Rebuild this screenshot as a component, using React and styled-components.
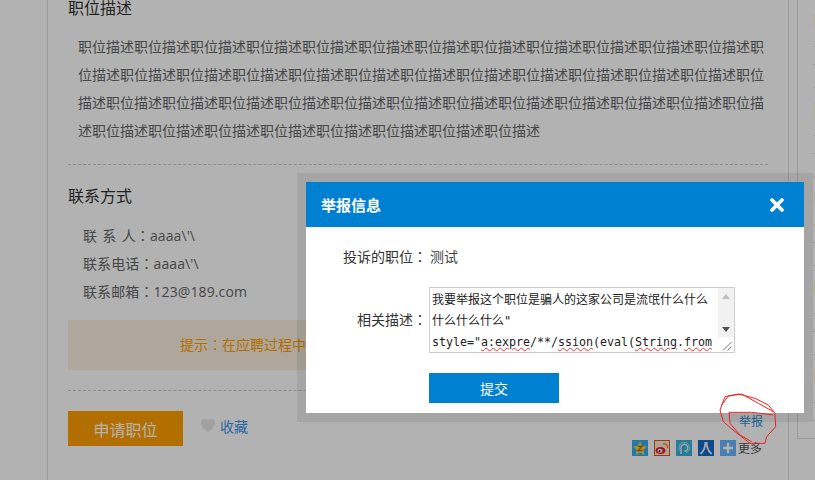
import React from 'react';
import styled, {createGlobalStyle} from 'styled-components';

const GlobalStyle = createGlobalStyle`
html, body {
    margin: 0;
    height: 100%;
    overflow: hidden;
    background: white;
}
body {
    font-family: 'Open Sans', 'Noto Sans CJK SC', sans-serif;
    font-size: 14px;
    color: #666;
}
* {
    box-sizing: border-box;
}
`;

const Page = styled.div`
display: flex;
align-items: flex-start;
height: 480px;
padding-left: 47px;
overflow: hidden;
`;

const Main = styled.div`
flex: 0 0 742px;
height: 480px;
padding-left: 20px;
border-left: 1px solid #ddd;
border-right: 1px solid #ddd;
`;

const Content = styled.div`
width: 700px;
margin-top: -4px;
`;

const SectionTitle = styled.h3`
margin: 0;
font-size: 16px;
font-weight: 400;
line-height: 24px;
color: #333;
`;

const Paragraph = styled.p`
margin: 13px 0 0;
padding-left: 10px;
width: 698px;
font-size: 14px;
line-height: 28px;
color: #666;
word-break: break-all;
`;

const Dashed = styled.div`
margin-top: ${props => props.$top}px;
border-top: 1px dashed #ccc;
`;

const ContactTitle = styled(SectionTitle)`
margin-top: 19px;
`;

const ContactList = styled.ul`
margin: 14px 0 0;
padding: 0 0 0 15px;
list-style: none;
letter-spacing: 0.1px;
word-spacing: 1.5px;
color: #666;

li {
    height: 28px;
    line-height: 28px;
}
`;

// the fullwidth colon sits in the middle of its cell in the reference
const Colon = styled.span`
font-family: 'Noto Sans CJK TC', sans-serif;
line-height: 1;
`;

const Tip = styled.div`
margin-top: 14px;
height: 50px;
line-height: 50px;
text-align: center;
white-space: nowrap;
background: #fbf0df;
color: #ff9e00;
`;

const ActionRow = styled.div`
display: flex;
justify-content: space-between;
align-items: flex-start;
margin-top: 20px;
`;

const ActionLeft = styled.div`
display: flex;
align-items: center;
`;

const ApplyButton = styled.button`
width: 115px;
height: 35px;
padding: 0;
border: none;
background: #ff9f00;
font-family: inherit;
font-size: 16px;
color: white;
`;

const Favorite = styled.a`
display: flex;
align-items: center;
gap: 5px;
margin: -6px 0 0 18px;
color: #3c93ea;
`;

const ActionRight = styled.div`
display: flex;
flex-direction: column;
align-items: flex-end;
padding: 2px 6px 0 0;
`;

const ReportLink = styled.a`
margin-right: -1px;
font-size: 12px;
line-height: 17px;
color: #2a90d8;
`;

const ShareRow = styled.div`
display: flex;
align-items: center;
margin-top: 9px;
height: 18px;
`;

const ShareIcon = styled.svg`
display: block;
width: 16px;
height: 16px;
margin-right: 6px;
`;

const MoreLabel = styled.span`
margin-left: -4px;
font-size: 12px;
color: #555;
`;

const Sidebar = styled.aside`
flex: 0 0 220px;
margin: -24px 0 0 8px;
padding: 0 0 17px 15px;
border-left: 1px solid #ddd;
border-bottom: 1px solid #ddd;
`;

const SideItem = styled.div`
height: 89px;
padding: 13px 0 0 1px;
border-bottom: 1px solid #ddd;
font-size: 12px;
line-height: 20px;
white-space: nowrap;
color: #888;
`;

const SideTitle = styled.a`
display: block;
margin-bottom: 1px;
font-size: 14px;
color: #0080d0;
`;

const SideCompany = styled.div`
margin-bottom: 3px;
font-size: 14px;
color: #555;
`;

const Overlay = styled.div`
position: fixed;
top: 0;
right: 0;
bottom: 0;
left: 0;
background: rgba(0, 0, 0, 0.3);
`;

const DialogFrame = styled.div`
position: fixed;
top: 173px;
left: 297px;
width: 516px;
height: 249px;
padding: 9px;
background: rgba(0, 0, 0, 0.075);
`;

const Dialog = styled.div`
height: 231px;
background: white;
`;

const DialogHeader = styled.div`
display: flex;
justify-content: space-between;
align-items: center;
height: 45px;
padding: 0 20px 0 15px;
background: #0080d0;
color: white;
`;

const DialogTitle = styled.h4`
margin: 0;
font-size: 15px;
font-weight: 700;
`;

const CloseIcon = styled.svg`
display: block;
width: 14px;
height: 14px;
`;

const DialogBody = styled.div`
padding-top: 20px;
color: #333;
`;

const FormRow = styled.div`
display: flex;
align-items: center;
margin-top: ${props => props.$top || 0}px;
line-height: 20px;
`;

const FormLabel = styled.label`
flex: 0 0 121px;
height: 20px;
text-align: right;
`;

const FormValue = styled.span`
margin-left: 3px;
color: #444;
`;

const DescBox = styled.div`
position: relative;
width: 306px;
height: 66px;
margin-left: 2px;
padding: 2px 0 0 2px;
border: 1px solid #ccc;
overflow: hidden;
font-family: 'DejaVu Sans Mono', 'Noto Sans CJK SC', monospace;
font-size: 12px;
line-height: 21px;
white-space: pre;
color: #222;
`;

const CodeLine = styled.div`
font-size: 11.63px;
`;

const Misspelled = styled.span`
text-decoration: underline wavy #f03030;
text-decoration-thickness: 1px;
`;

const ScrollTrack = styled.div`
position: absolute;
top: 0;
right: 0;
display: flex;
flex-direction: column;
justify-content: space-between;
align-items: center;
width: 16px;
height: 49px;
padding: 6px 0 5px;
background: #f1f1f1;
`;

const ScrollArrow = styled.i`
display: block;
border-left: 4px solid transparent;
border-right: 4px solid transparent;
border-top: ${props => props.$down ? '5px solid #505050' : 'none'};
border-bottom: ${props => props.$down ? 'none' : '5px solid #c0c0c0'};
`;

const Resizer = styled.svg`
position: absolute;
right: 0;
bottom: 0;
display: block;
width: 16px;
height: 15px;
`;

const SubmitButton = styled.button`
display: block;
width: 130px;
height: 30px;
margin: 20px 0 0 123px;
padding: 0;
border: none;
background: #0080d0;
font-family: inherit;
font-size: 14px;
color: white;
`;

const Scribble = styled.svg`
position: fixed;
top: 380px;
left: 625px;
width: 190px;
height: 100px;
`;

const sideItems = [1, 2, 3, 4, 5];
const jobText = '职位描述'.repeat(45);

const App = () => {
    return (
        <>
            <GlobalStyle/>
            <Page>
                <Main>
                    <Content>
                        <SectionTitle>职位描述</SectionTitle>
                        <Paragraph>{jobText}</Paragraph>
                        <Dashed $top={19}/>
                        <ContactTitle>联系方式</ContactTitle>
                        <ContactList>
                            <li>联 系 人<Colon>：</Colon>aaaa\'\</li>
                            <li>联系电话<Colon>：</Colon>aaaa\'\</li>
                            <li>联系邮箱<Colon>：</Colon>123@189.com</li>
                        </ContactList>
                        <Tip>提示<Colon>：</Colon>在应聘过程中如遇到用人单位收取费用等情况请提高警惕并及时举报。</Tip>
                        <Dashed $top={20}/>
                        <ActionRow>
                            <ActionLeft>
                                <ApplyButton>申请职位</ApplyButton>
                                <Favorite>
                                    <svg width='14' height='13' viewBox='0 0 14 13'>
                                        <path d='M7 13 C3 10 0 7.5 0 4 C0 1.5 1.8 0 3.8 0 C5.2 0 6.3 .7 7 1.8 C7.7 .7 8.8 0 10.2 0 C12.2 0 14 1.5 14 4 C14 7.5 11 10 7 13 Z' fill='#e6e6e6'/>
                                    </svg>
                                    收藏
                                </Favorite>
                            </ActionLeft>
                            <ActionRight>
                                <ReportLink>举报</ReportLink>
                                <ShareRow>
                                    <ShareIcon viewBox='0 0 16 16'>
                                        <rect width='16' height='16' fill='#32abf0'/>
                                        <path d='M8 1 L10 6 L15 6.5 L11.2 10 L12.4 15 L8 12.4 L3.6 15 L4.8 10 L1 6.5 L6 6 Z' fill='#ffd030'/>
                                        <path d='M6 6.5 H10 L6 10.5 H10.5' fill='none' stroke='#a86a10' strokeWidth='1.3'/>
                                    </ShareIcon>
                                    <ShareIcon viewBox='0 0 16 16'>
                                        <rect x='.5' y='.5' width='15' height='15' fill='#fbe9d8' stroke='#e0541c'/>
                                        <ellipse cx='6.5' cy='10.5' rx='5' ry='3.6' fill='#e6162d'/>
                                        <ellipse cx='6' cy='10.8' rx='2.6' ry='2' fill='#fff'/>
                                        <circle cx='5.6' cy='11' r='1.1' fill='#222'/>
                                        <path d='M9 4 C12 3 14 5 13.4 8.2' fill='none' stroke='#f08a1c' strokeWidth='1.4'/>
                                    </ShareIcon>
                                    <ShareIcon viewBox='0 0 16 16'>
                                        <rect width='16' height='16' fill='#3ab0d8'/>
                                        <path d='M5 14 V8 A3.4 3.4 0 1 1 8.4 11.2' fill='none' stroke='#e4f6fa' strokeWidth='1.3'/>
                                        <path d='M3 11 V7.6 A5.2 5.2 0 1 1 10 12.6' fill='none' stroke='#b8e4f2' strokeWidth='1'/>
                                    </ShareIcon>
                                    <ShareIcon viewBox='0 0 16 16'>
                                        <rect width='16' height='16' fill='#156ac5'/>
                                        <path d='M7.4 2 C7.4 7 6 11 2.4 14 M8.6 2 C8.6 7 10 11 13.6 14' fill='none' stroke='#e8f0f8' strokeWidth='1.8'/>
                                    </ShareIcon>
                                    <ShareIcon viewBox='0 0 16 16'>
                                        <rect width='16' height='16' fill='#6ab5ff'/>
                                        <path d='M8 3 V13 M3 8 H13' stroke='#fff' strokeWidth='2.4'/>
                                    </ShareIcon>
                                    <MoreLabel>更多</MoreLabel>
                                </ShareRow>
                            </ActionRight>
                        </ActionRow>
                    </Content>
                </Main>
                <Sidebar>
                    {sideItems.map(item => (
                        <SideItem key={item}>
                            <SideTitle>一般职位</SideTitle>
                            <SideCompany>国信公司</SideCompany>
                            <div>工作地点</div>
                        </SideItem>
                    ))}
                </Sidebar>
            </Page>
            <Overlay/>
            <DialogFrame>
                <Dialog>
                    <DialogHeader>
                        <DialogTitle>举报信息</DialogTitle>
                        <CloseIcon viewBox='0 0 14 14'>
                            <path d='M2 2 L12 12 M12 2 L2 12' stroke='white' strokeWidth='3.6' strokeLinecap='round'/>
                        </CloseIcon>
                    </DialogHeader>
                    <DialogBody>
                        <FormRow>
                            <FormLabel>投诉的职位<Colon>：</Colon></FormLabel>
                            <FormValue>测试</FormValue>
                        </FormRow>
                        <FormRow $top={20}>
                            <FormLabel>相关描述<Colon>：</Colon></FormLabel>
                            <DescBox>
                                <div>我要举报这个职位是骗人的这家公司是流氓什么什么</div>
                                <div>什么什么什么"</div>
                                <CodeLine>style="<Misspelled>a:expre</Misspelled>/**/<Misspelled>ssion</Misspelled>(eval(<Misspelled>String</Misspelled>.<Misspelled>from</Misspelled></CodeLine>
                                <ScrollTrack>
                                    <ScrollArrow/>
                                    <ScrollArrow $down/>
                                </ScrollTrack>
                                <Resizer viewBox='0 0 16 15'>
                                    <rect width='16' height='15' fill='white'/>
                                    <path d='M5 13.5 L13.5 5 M9.5 13.5 L13.5 9.5' stroke='#777' strokeWidth='1'/>
                                </Resizer>
                            </DescBox>
                        </FormRow>
                        <SubmitButton>提交</SubmitButton>
                    </DialogBody>
                </Dialog>
            </DialogFrame>
            <Scribble viewBox='0 0 570 300'>
                <g fill='none' stroke='#f02020' strokeWidth='3'>
                    <path d='M300 50 L340 42 L390 55 L430 75 L450 100 L452 140 L425 170 L420 190 L375 190 L330 155 L295 125 L285 90 Z'/>
                    <path d='M290 75 L310 48 L350 42 L400 70 L445 95'/>
                    <path d='M445 105 L380 97 L312 97 L315 130 L345 165 L380 185'/>
                </g>
            </Scribble>
        </>
    );
};

export default App;
